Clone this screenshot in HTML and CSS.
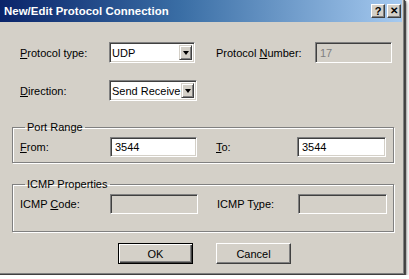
FILE: index.html
```html
<!DOCTYPE html>
<html>
<head>
<meta charset="utf-8">
<link rel="stylesheet" href="styles.css">
</head>
<body>
<div class="dialog">
  <div class="titlebar">
    <span class="title">New/Edit Protocol Connection</span>
    <div class="tbtns">
      <span class="tbtn help">?</span>
      <span class="tbtn close">✕</span>
    </div>
  </div>
  <div class="content">
    <div class="row r1">
      <span class="lbl l1"><u>P</u>rotocol type:</span>
      <div class="select s1"><span class="val">UDP</span><span class="arrow"><i></i></span></div>
      <span class="lbl l2">Protocol <u>N</u>umber:</span>
      <div class="input disabled w76">17</div>
    </div>
    <div class="row r2">
      <span class="lbl l1"><u>D</u>irection:</span>
      <div class="select s2"><span class="val">Send Receive</span><span class="arrow"><i></i></span></div>
    </div>
    <fieldset class="group g1">
      <legend>Port Range</legend>
      <div class="row">
        <span class="lbl l1b"><u>F</u>rom:</span>
        <div class="input w87">3544</div>
        <span class="lbl l2b"><u>T</u>o:</span>
        <div class="input w89">3544</div>
      </div>
    </fieldset>
    <fieldset class="group g2">
      <legend>ICMP Properties</legend>
      <div class="row">
        <span class="lbl l1b">ICMP <u>C</u>ode:</span>
        <div class="input disabled w88"></div>
        <span class="lbl l2b">ICMP T<u>y</u>pe:</span>
        <div class="input disabled w89"></div>
      </div>
    </fieldset>
    <div class="buttons">
      <button class="btn default">OK</button>
      <button class="btn">Cancel</button>
    </div>
  </div>
</div>
</body>
</html>
```
FILE: styles.css
```css
html, body {
  margin: 0;
  padding: 0;
  background: #ffffff;
}
body {
  font-family: "Liberation Sans", Arial, sans-serif;
  font-size: 11px;
  color: #000;
}
.dialog {
  width: 405px;
  height: 275px;
  box-sizing: border-box;
  background: #d4d0c8;
  border-right: 1px solid #404040;
  border-bottom: 1px solid #404040;
  box-shadow: inset -1px -1px 0 #808080, 1px 1px 1px rgba(0,0,0,0.6), 2px 2px 3px rgba(0,0,0,0.35);
  overflow: hidden;
}
.titlebar {
  height: 22px;
  margin-right: 2px;
  background: linear-gradient(to right, #0a246a 0%, #3a6ea5 45%, #a6caf0 100%);
  display: flex;
  align-items: center;
  justify-content: space-between;
  padding-left: 4px;
}
.title {
  color: #fff;
  font-weight: bold;
  font-size: 11.4px;
  letter-spacing: 0.05px;
}
.tbtns {
  display: flex;
  gap: 2px;
  padding-right: 1px;
}
.tbtn {
  width: 14px;
  height: 14px;
  box-sizing: border-box;
  background: #d4d0c8;
  border: 1px solid;
  border-color: #fff #404040 #404040 #fff;
  box-shadow: inset -1px -1px 0 #808080;
  display: flex;
  align-items: center;
  justify-content: center;
  font-weight: bold;
  font-size: 11px;
  line-height: 1;
  color: #000;
}
.close { font-size: 10px; }
.content {
  padding: 20px 0 0 12px;
}
.row {
  display: flex;
  align-items: center;
  height: 21px;
}
.r1, .r2 { padding-left: 8px; }
.r2 { margin-top: 17px; }
.lbl { white-space: nowrap; }
.l1 { width: 89px; }
.l2 { width: 99px; margin-left: 21px; }
.l1b { width: 90px; }
.l2b { width: 81px; margin-left: 19px; }
.select {
  height: 21px;
  box-sizing: border-box;
  background: #fff;
  border: 1px solid;
  border-color: #808080 #fff #fff #808080;
  box-shadow: inset 1px 1px 0 #404040, inset -1px -1px 0 #d4d0c8;
  display: flex;
  align-items: center;
  justify-content: space-between;
  padding: 2px 2px 2px 2px;
}
.s1 { width: 86px; }
.s2 { width: 88px; }
.val { white-space: nowrap; }
.arrow {
  width: 13px;
  height: 15px;
  flex: none;
  box-sizing: border-box;
  background: #d4d0c8;
  border: 1px solid;
  border-color: #d4d0c8 #404040 #404040 #d4d0c8;
  box-shadow: inset 1px 1px 0 #fff, inset -1px -1px 0 #808080;
  display: flex;
  align-items: center;
  justify-content: center;
}
.arrow i {
  width: 0;
  height: 0;
  border-left: 3.5px solid transparent;
  border-right: 3.5px solid transparent;
  border-top: 4px solid #000;
}
.input {
  height: 20px;
  box-sizing: border-box;
  background: #fff;
  border: 1px solid;
  border-color: #808080 #fff #fff #808080;
  box-shadow: inset 1px 1px 0 #404040, inset -1px -1px 0 #d4d0c8;
  padding: 0 4px;
  display: flex;
  align-items: center;
}
.input.disabled {
  background: #d4d0c8;
  color: #808080;
}
.w76 { width: 77px; height: 21px; }
.w87 { width: 87px; }
.w88 { width: 88px; }
.w89 { width: 89px; }
.group {
  width: 382px;
  box-sizing: border-box;
  margin: 0;
  border: 1px solid #808080;
  box-shadow: inset 1px 1px 0 #fff, 1px 1px 0 #fff;
  padding: 3px 0 0 7px;
}
.group legend {
  padding: 0 2px;
  margin-left: 5px;
  line-height: 13px;
  font-size: 11px;
}
.g1 { margin-top: 20px; padding-bottom: 5px; }
.g1 .row { height: 20px; }
.g2 { margin-top: 15px; padding-bottom: 17px; }
.g2 .row { height: 20px; }
.buttons {
  display: flex;
  gap: 23px;
  padding-left: 106px;
  margin-top: 11px;
}
.btn {
  width: 75px;
  height: 21px;
  box-sizing: border-box;
  font-family: "Liberation Sans", Arial, sans-serif;
  font-size: 11px;
  color: #000;
  background: #d4d0c8;
  border: 1px solid;
  border-color: #fff #404040 #404040 #fff;
  box-shadow: inset -1px -1px 0 #808080;
  padding: 0;
}
.btn.default {
  border: 1px solid #000;
  box-shadow: inset 1px 1px 0 #fff, inset -1px -1px 0 #404040, inset -2px -2px 0 #808080;
}
u { text-decoration: underline; text-underline-offset: 1px; }
```
